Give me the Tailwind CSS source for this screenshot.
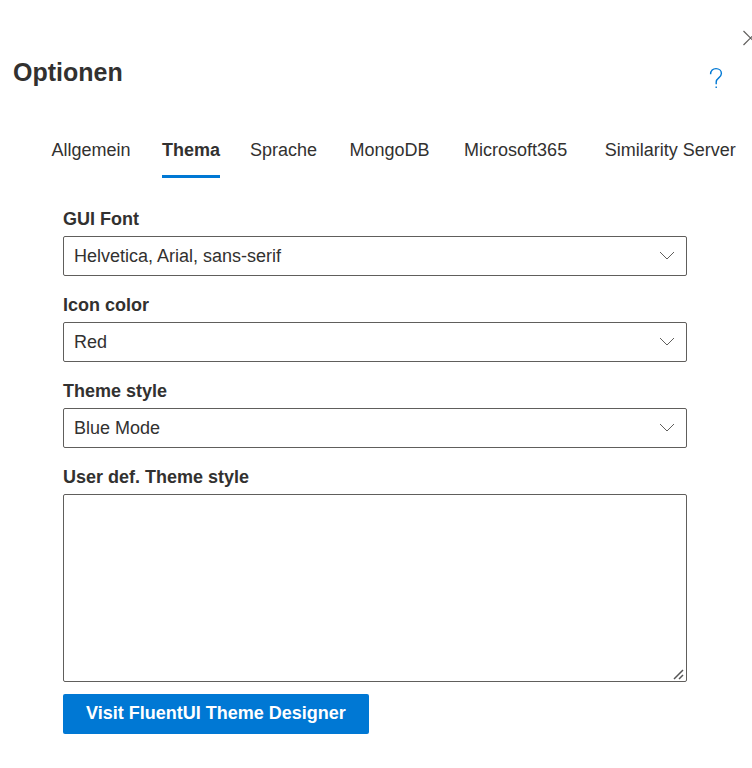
<!DOCTYPE html>
<html lang="de">
<head>
<meta charset="utf-8">
<meta name="viewport" content="width=device-width, initial-scale=1">
<title>Optionen</title>
<script src="https://cdn.jsdelivr.net/npm/@tailwindcss/browser@4"></script>
</head>
<body class="bg-white font-['Liberation_Sans',Arial,sans-serif] text-[18px] leading-6 text-[#323130] overflow-x-hidden">
<main>
  <header class="flex items-start justify-between pl-[13px] pt-[26px] h-[126px]">
    <h1 class="mt-[30px] text-[25px] leading-8 font-bold">Optionen</h1>
    <div class="flex flex-col items-end">
      <button type="button" aria-label="Schließen" class="-mr-2 h-6 text-[#605e5c]">
        <svg class="w-[18px] h-6" viewBox="0 0 18 24" fill="none" stroke="currentColor" stroke-width="1.2"><path d="M1.500 5l14 14M15.500 5l-14 14"/></svg>
      </button>
      <button type="button" aria-label="Hilfe" class="mr-[28px] mt-4 h-6 text-[#0078d4]">
        <svg class="w-4 h-6" viewBox="0 0 16 24" fill="none" stroke="currentColor" stroke-width="1.4"><path d="M2.6 8.200C2.600 4.600 5 2.600 8 2.600s5.400 2 5.400 4.900c0 4.400-5.200 4.300-5.200 8.500v2.200M8.200 20.400v1.600"/></svg>
      </button>
    </div>
  </header>
  <div role="tablist" class="flex gap-7 pl-12 whitespace-nowrap">
    <button type="button" role="tab" aria-selected="false" data-title="Allgemein" class="h-[52px] shrink-0 flex flex-col items-center pt-3 after:content-[attr(data-title)] after:font-bold after:invisible after:h-0">Allgemein</button>
    <button type="button" role="tab" aria-selected="true" class="h-[52px] shrink-0 pb-[13px] pt-3 font-bold border-b-3 border-[#0078d4]">Thema</button>
    <button type="button" role="tab" aria-selected="false" data-title="Sprache" class="h-[52px] shrink-0 flex flex-col items-center pt-3 after:content-[attr(data-title)] after:font-bold after:invisible after:h-0">Sprache</button>
    <button type="button" role="tab" aria-selected="false" data-title="MongoDB" class="h-[52px] shrink-0 flex flex-col items-center pt-3 after:content-[attr(data-title)] after:font-bold after:invisible after:h-0">MongoDB</button>
    <button type="button" role="tab" aria-selected="false" data-title="Microsoft365" class="h-[52px] shrink-0 flex flex-col items-center pt-3 after:content-[attr(data-title)] after:font-bold after:invisible after:h-0">Microsoft365</button>
    <button type="button" role="tab" aria-selected="false" data-title="Similarity Server" class="h-[52px] shrink-0 flex flex-col items-center pt-3 after:content-[attr(data-title)] after:font-bold after:invisible after:h-0">Similarity Server</button>
  </div>
  <form class="pl-[63px] pr-[65px] pt-7">
    <label for="font" class="block h-[30px] pt-px font-bold">GUI Font</label>
    <div class="relative mb-4">
      <select id="font" class="block w-full h-10 appearance-none rounded-xs border border-[#605e5c] bg-white px-[10px]"><option>Helvetica, Arial, sans-serif</option></select>
      <svg class="pointer-events-none absolute right-3 top-3 w-4 h-4" viewBox="0 0 16 16" fill="none" stroke="#605e5c"><path d="M1 4l7 7 7-7"/></svg>
    </div>
    <label for="icon" class="block h-[30px] pt-px font-bold">Icon color</label>
    <div class="relative mb-4">
      <select id="icon" class="block w-full h-10 appearance-none rounded-xs border border-[#605e5c] bg-white px-[10px]"><option>Red</option></select>
      <svg class="pointer-events-none absolute right-3 top-3 w-4 h-4" viewBox="0 0 16 16" fill="none" stroke="#605e5c"><path d="M1 4l7 7 7-7"/></svg>
    </div>
    <label for="style" class="block h-[30px] pt-px font-bold">Theme style</label>
    <div class="relative mb-4">
      <select id="style" class="block w-full h-10 appearance-none rounded-xs border border-[#605e5c] bg-white px-[10px]"><option>Blue Mode</option></select>
      <svg class="pointer-events-none absolute right-3 top-3 w-4 h-4" viewBox="0 0 16 16" fill="none" stroke="#605e5c"><path d="M1 4l7 7 7-7"/></svg>
    </div>
    <label for="custom" class="block h-[30px] pt-px font-bold">User def. Theme style</label>
    <div class="relative mb-3">
      <textarea id="custom" class="block w-full h-[188px] resize-none rounded-xs border border-[#605e5c] bg-white px-[10px] py-2"></textarea>
      <svg class="pointer-events-none absolute right-[2px] bottom-[2px] w-3 h-3" viewBox="0 0 12 12" fill="none" stroke="#555" stroke-width="1.500"><path d="M1 11L10 2M6 11l4-4"/></svg>
    </div>
    <button type="button" class="h-10 rounded-xs bg-[#0078d4] px-[23px] pb-[2px] font-bold text-white">Visit FluentUI Theme Designer</button>
  </form>
</main>
</body>
</html>
